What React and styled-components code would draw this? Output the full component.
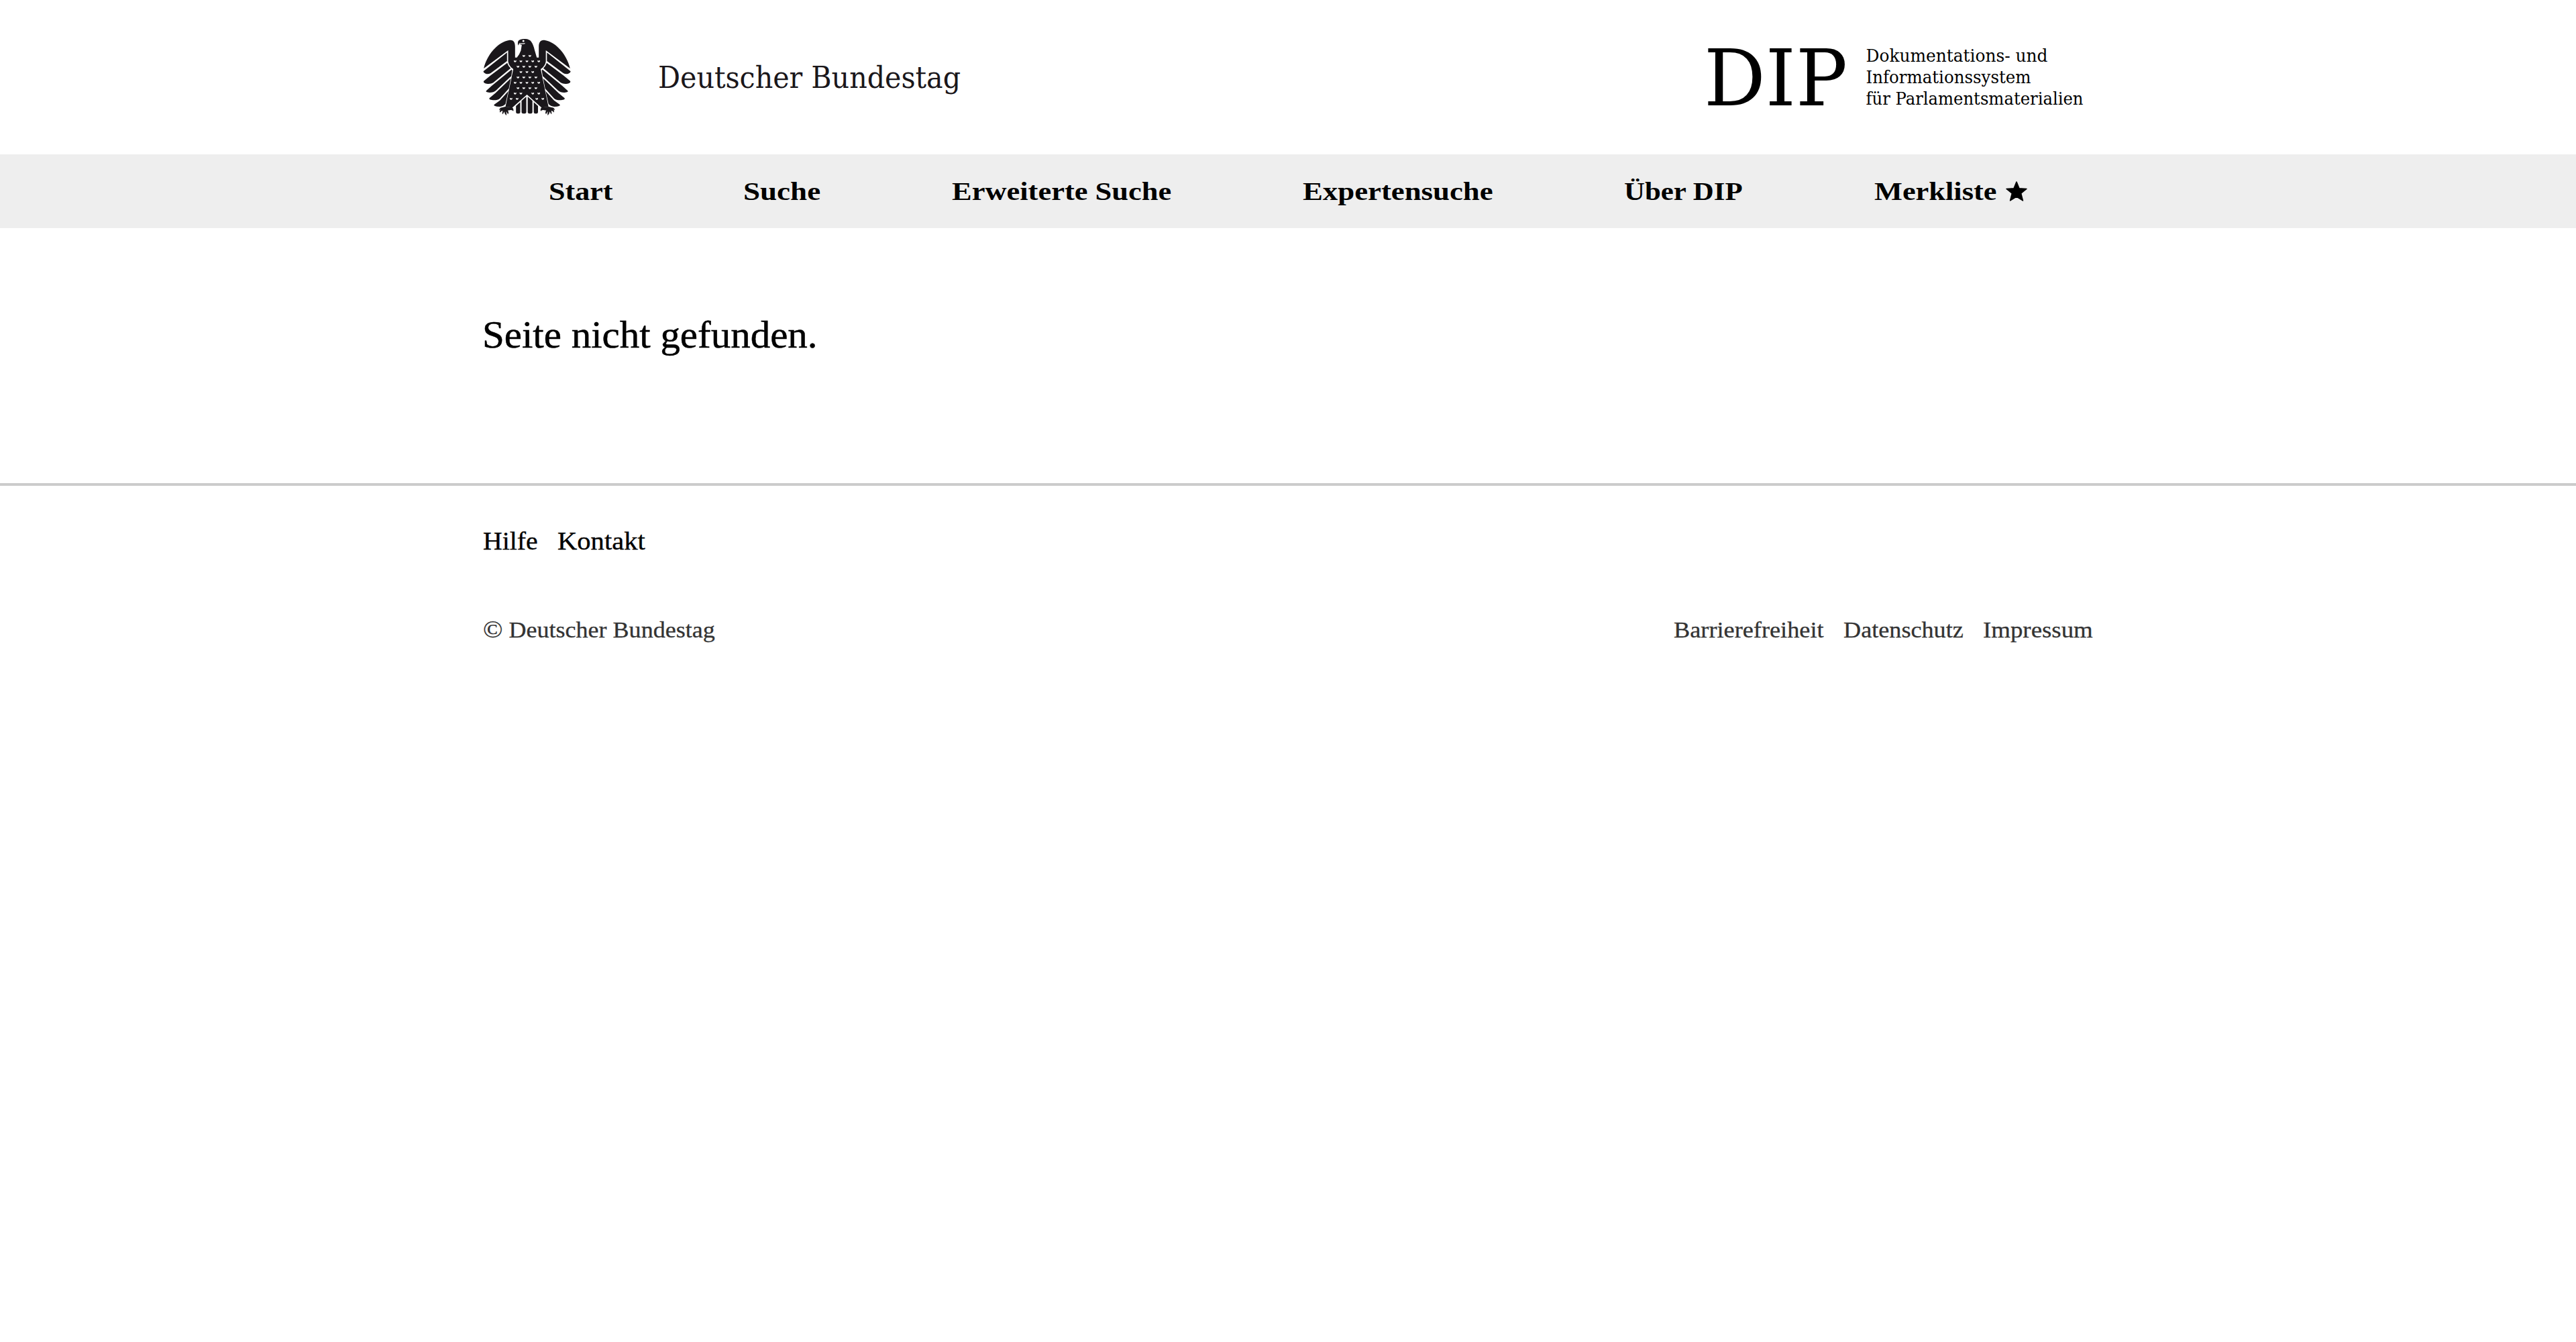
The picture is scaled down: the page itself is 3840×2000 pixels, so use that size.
import React from "react";
import styled, { createGlobalStyle } from "styled-components";

const GlobalStyle = createGlobalStyle`
  body {
    margin: 0;
    background: #fff;
    color: #000;
    font-family: "Liberation Serif", "Times New Roman", serif;
  }
`;

const Container = styled.div`
  box-sizing: border-box;
  width: 2400px;
  margin: 0 auto;
  display: flex;
  align-items: ${(p) => p.$align || "center"};
  justify-content: ${(p) => p.$justify || "space-between"};
`;

const Header = styled.header`
  height: 230px;
  display: flex;
`;

const Brand = styled.a`
  display: flex;
  align-items: center;
  gap: 130px;
  color: #1a171b;
`;

const EagleSvg = styled.svg`
  display: block;
  width: 131px;
  height: 114px;
`;

const WordmarkSvg = styled.svg`
  display: block;
  overflow: visible;
  width: ${(p) => p.$w}px;
  height: ${(p) => p.$h}px;
  font-family: "DejaVu Serif Condensed", "DejaVu Serif", serif;
  font-stretch: condensed;
  fill: currentColor;
`;

const DipLink = styled.a`
  color: #000;
  margin-right: 14px;
`;

const NavBar = styled.nav`
  height: 110px;
  background: #eee;
  display: flex;
`;

/* Widens the letterforms; $w is the advance after widening. */
const Word = styled.span`
  display: inline-block;
  width: ${(p) => p.$w}px;
  white-space: nowrap;
  transform: scaleX(${(p) => p.$stretch});
  transform-origin: left center;
`;

const NavItem = styled.a`
  display: flex;
  align-items: center;
  gap: 14px;
  font-size: 37.7px;
  font-weight: 700;
  line-height: 44px;
`;

const Star = styled.svg`
  display: block;
  width: 32px;
  height: 30px;
`;

const Main = styled.main`
  height: 380px;
`;

const Title = styled.h1`
  margin: 0 0 0 -1px;
  padding-top: 127px;
  font-size: 56.5px;
  font-weight: 400;
  line-height: 64px;
  -webkit-text-stroke: 0.5px currentColor;
`;

const Footer = styled.footer`
  border-top: 4px solid #cbcbcb;
  padding-top: 60px;
`;

const Links = styled.div`
  display: flex;
  gap: ${(p) => p.$gap}px;
`;

const FooterMain = styled(Container)`
  font-size: 37.7px;
  line-height: 44px;
  -webkit-text-stroke: 0.35px currentColor;
`;

const FooterMeta = styled(Container)`
  margin-top: 91px;
  font-size: 33.5px;
  line-height: 40px;
  color: #333;
  -webkit-text-stroke: 0.3px currentColor;
`;

const CopyrightSign = styled.span`
  font-size: 36px;
  line-height: 1;
`;

const NAV = [
  { label: "Start", w: 95, stretch: 1.17 },
  { label: "Suche", w: 115, stretch: 1.195 },
  { label: "Erweiterte Suche", w: 327, stretch: 1.18 },
  { label: "Expertensuche", w: 284, stretch: 1.188 },
  { label: "Über DIP", w: 177, stretch: 1.138 },
  { label: "Merkliste", w: 182, stretch: 1.178, star: true },
];

const SPOTS = [
  [130, [243, 270]],
  [154, [204, 230, 257, 283, 310]],
  [178, [217, 243, 270, 297]],
  [202, [230, 257, 283]],
  [226, [217, 243, 270, 297]],
  [250, [204, 230, 257, 283, 310]],
  [274, [217, 243, 270, 297]],
  [298, [204, 230, 283, 310]],
  [322, [186, 213, 301, 328]],
];

const WING = [
  "M63 198 L168 115 V153 L95 207 Q84 213 72 209 Q60 204 63 198Z",
  "M64 242 L95 217 L169 161 Q173 175 184 185 L106 250 Q94 257 76 254 Q60 250 64 242Z",
  "M75 286 L100 263 L188 191 L191 195 L187 220 L118 285 Q108 294 90 294 Q70 292 75 286Z",
  "M89 319 L115 297 L185 230 L176 276 L136 320 Q126 329 105 328 Q85 326 89 319Z",
  "M110 348 L136 329 L174 287 L161 345 Q152 356 135 357 Q106 356 110 348Z",
];

const FOOT =
  "M160 357 L191 360 Q199 366 196 377 Q192 371 184 372 L171 374 Q178 382 172 391 Q169 383 163 378 Q167 387 165 396 Q158 391 155 379 Q153 387 147 391 Q146 382 149 375 Q141 376 137 383 Q133 376 139 369 L133 373 Q134 362 145 361Z";

function Eagle() {
  const half = (
    <>
      {WING.map((d) => (
        <path key={d} d={d} />
      ))}
      <path d={FOOT} />
      <path d="M208 354 L227 337 V380 Q227 388 217.500 388 Q208 388 208 380Z" />
      <path d="M233 331 L254 312 V380 Q254 388 243.500 388 Q233 388 233 380Z" />
    </>
  );
  return (
    <EagleSvg viewBox="61 54 392 342" fill="currentColor" role="img" aria-label="Bundesadler">
      {half}
      <g transform="translate(514.500 0) scale(-1 1)">{half}</g>
      <path d="M64 186 C76 130 125 66 180 59 C197 58 204 70 204 88 V137 H212 Q224 124 230 106 L234 81 Q226 80 222 75 L218 83 Q213 68 221 60 Q229 53 250 54 Q268 55 276 66 Q286 80 291 103 L301 137 H310 V88 C310 70 317 58 334 59 C389 66 438 130 450 186 L341.500 105 V155 Q338.500 175 318.500 189 L353.500 358 L322 361 L257.200 303 L192 361 L161 358 L196 189 Q176 175 173 155 V105Z" />
      <g fill="#fff">
        <circle cx="241" cy="63" r="4.500" />
        <path d="M222 72.500 Q235 75 248 72 V75.500 Q235 78.500 222 75.500Z" />
        {SPOTS.map(([y, xs]) =>
          xs.map((x) => (
            <path
              key={`${x}-${y}`}
              transform={`translate(${x} ${y})`}
              d="M-5.500 -4.500 L-2 -2.500 H2 L5.500 -4.500 V0 Q5 4 0 4 Q-5 4 -5.500 0Z"
            />
          ))
        )}
      </g>
    </EagleSvg>
  );
}

export default function App() {
  return (
    <>
      <GlobalStyle />
      <Header>
        <Container>
          <Brand>
            <Eagle />
            <WordmarkSvg $w={452} $h={60} viewBox="0 0 452 60">
              <text x="0" y="45.500" fontSize="45" textLength="451" lengthAdjust="spacingAndGlyphs">
                Deutscher Bundestag
              </text>
            </WordmarkSvg>
          </Brand>
          <DipLink>
            <WordmarkSvg $w={562} $h={90} viewBox="0 0 562 90">
              <text x="-4" y="86.500" fontSize="116" textLength="214" lengthAdjust="spacingAndGlyphs">
                DIP
              </text>
              <g fontSize="26">
                <text x="237.500" y="22" textLength="271" lengthAdjust="spacingAndGlyphs">
                  Dokumentations- und
                </text>
                <text x="237.500" y="54" textLength="246" lengthAdjust="spacingAndGlyphs">
                  Informationssystem
                </text>
                <text x="237.500" y="86" textLength="324" lengthAdjust="spacingAndGlyphs">
                  für Parlamentsmaterialien
                </text>
              </g>
            </WordmarkSvg>
          </DipLink>
        </Container>
      </Header>
      <NavBar>
        <Container $justify="space-around">
          {NAV.map(({ label, w, stretch, star }) => (
            <NavItem key={label}>
              <Word $w={w} $stretch={stretch}>
                {label}
              </Word>
              {star && (
                <Star viewBox="0 0 30 28">
                  <path
                    d="M15 1 L18.700 10 L29 10.700 L21.200 17 L23.800 27 L15 21.600 L6.200 27 L8.800 17 L1 10.700 L11.300 10Z"
                    stroke="#000"
                    strokeWidth="1.500"
                    strokeLinejoin="round"
                  />
                </Star>
              )}
            </NavItem>
          ))}
        </Container>
      </NavBar>
      <Main>
        <Container $align="flex-start">
          <Title>
            <Word $w={500} $stretch={1.044}>
              Seite nicht gefunden.
            </Word>
          </Title>
        </Container>
      </Main>
      <Footer>
        <FooterMain>
          <Links $gap={29}>
            <Word $w={82} $stretch={1.055}>Hilfe</Word>
            <Word $w={131} $stretch={1.077}>Kontakt</Word>
          </Links>
        </FooterMain>
        <FooterMeta>
          <Word $w={346} $stretch={1.076}>
            <CopyrightSign>©</CopyrightSign> Deutscher Bundestag
          </Word>
          <Links $gap={29}>
            <Word $w={224} $stretch={1.083}>Barrierefreiheit</Word>
            <Word $w={179} $stretch={1.08}>Datenschutz</Word>
            <Word $w={164} $stretch={1.1}>Impressum</Word>
          </Links>
        </FooterMeta>
      </Footer>
    </>
  );
}
